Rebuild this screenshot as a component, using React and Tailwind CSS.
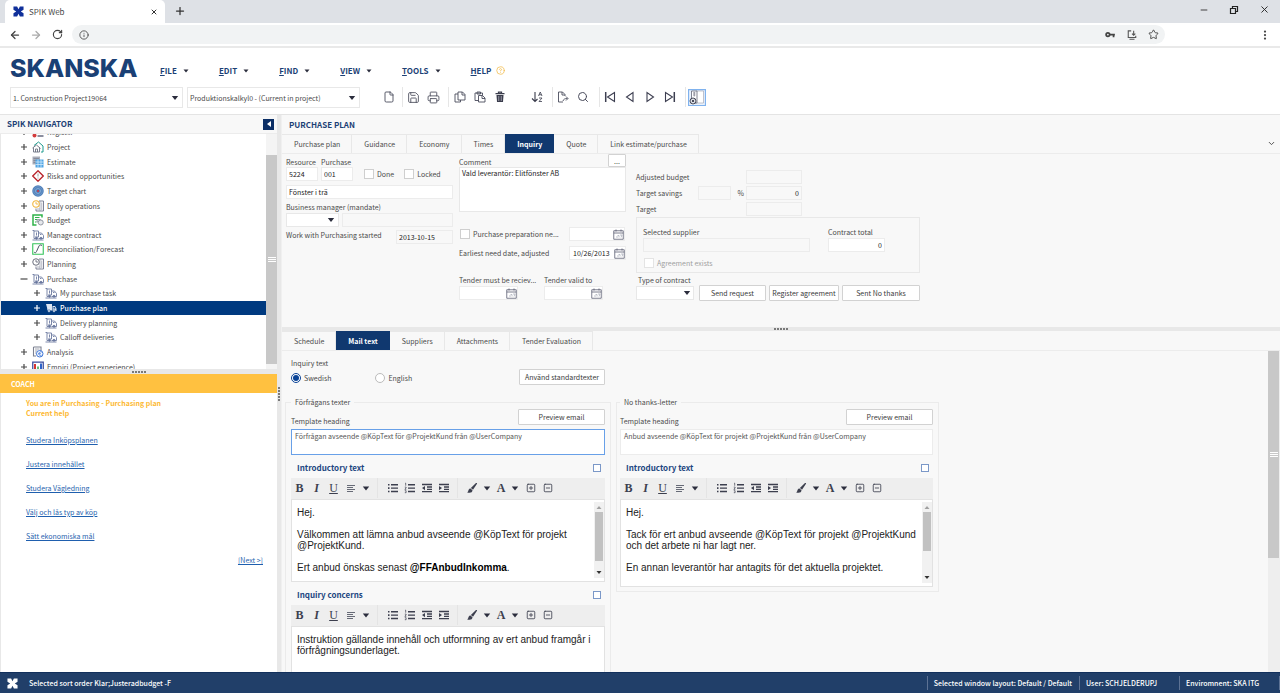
import React from "react";
import {
  File, Save, Printer, Search, Plus, X, Minus,
  ArrowLeft, ArrowRight, RotateCw, Info, Star, MoreVertical, ChevronDown, CircleHelp,
  SquarePlus, SquareMinus,
} from "lucide-react";

function Caret({ className = "" }) {
  return (
    <svg viewBox="0 0 8 5" className={"h-[5px] w-[8px] shrink-0 " + className} aria-hidden="true">
      <path d="M0.8 0.5h6.400L4 4.500z" fill="#2b2d3d" />
    </svg>
  );
}

function SpikMark({ color = "#10309a", className = "h-3 w-3" }) {
  return (
    <svg viewBox="0 0 24 24" className={className} aria-hidden="true">
      <path d="M1 1h8l3 6 3-6h8v7l-6 4 6 4v7h-8l-3-6-3 6H1v-7l6-4-6-4z" fill={color} />
    </svg>
  );
}

/* ---------- navigator icons ---------- */
const sv = "h-[12px] w-[12px] shrink-0";
const icons = {
  register: (
    <svg viewBox="0 0 24 24" className={sv}><circle cx="5" cy="19" r="4" fill="#d33c3c" /><path d="M11 20h12M11 12h12" stroke="#666a80" strokeWidth="3" /></svg>
  ),
  project: (
    <svg viewBox="0 0 24 24" className={sv} fill="none"><path d="M4 9l9-7 9 8v12h-4" stroke="#1d9a8c" strokeWidth="2" /><path d="M1 14l8-6 8 7M3 13v9h12v-9M7 22v-6h4v6" stroke="#6a6f80" strokeWidth="1.800" /></svg>
  ),
  estimate: (
    <svg viewBox="0 0 24 24" className={sv}><path d="M1 1h15v16H1z" fill="#a9adb8" /><path d="M3 5h11M3 9h11M3 13h11" stroke="#7c8090" strokeWidth="1.500" /><path d="M7 7h16v16H7z" fill="#4fa4e4" /><path d="M7 12h16M7 17h16M12 7v16M18 7v16" stroke="#d8edfc" strokeWidth="1.500" /></svg>
  ),
  risk: (
    <svg viewBox="0 0 24 24" className={sv} fill="none"><path d="M12 1.500L22.500 12 12 22.500 1.500 12z" stroke="#b8232b" strokeWidth="2.600" /><path d="M12 7v6M12 15v2" stroke="#999" strokeWidth="2" /></svg>
  ),
  target: (
    <svg viewBox="0 0 24 24" className={sv}><circle cx="12" cy="12" r="11.500" fill="#4e7fba" /><circle cx="12" cy="12" r="8.500" fill="none" stroke="#7ea6d2" strokeWidth="1.200" /><circle cx="12" cy="12" r="5" fill="none" stroke="#a4c1e2" strokeWidth="1.300" /><circle cx="12" cy="12" r="2" fill="#d3303a" /></svg>
  ),
  daily: (
    <svg viewBox="0 0 24 24" className={sv} fill="none"><path d="M14 2h9v20H8v-5" stroke="#70758a" strokeWidth="1.800" /><path d="M16 2v20M19.500 5v15M10 18h6" stroke="#9a9eae" strokeWidth="1.500" /><circle cx="8" cy="8" r="6.500" fill="#fff" stroke="#f0b53a" strokeWidth="2.200" /><path d="M8 4v4h4" stroke="#f0b53a" strokeWidth="1.800" /></svg>
  ),
  budget: (
    <svg viewBox="0 0 24 24" className={sv} fill="none"><path d="M20 7V2H2v20h7" stroke="#2fb34a" strokeWidth="3" /><path d="M6 7h9M6 11h4M6 16h3" stroke="#2fb34a" strokeWidth="2.200" /><path d="M10 11h7v5h-7z" fill="#d5d9de" stroke="#8a8f9c" strokeWidth="1.500" /><circle cx="17.500" cy="17" r="5" fill="#e6e8ec" stroke="#8a8f9c" strokeWidth="1.800" /></svg>
  ),
  truck: (
    <svg viewBox="0 0 24 24" className={sv} fill="none" stroke="#66749c" strokeWidth="1.700"><path d="M1 3h3v16h3M4 4h9v12H6M9 7v6M13 8h6l4 5v6h-3M13 19h3M16 11h3M1 22h22" /><circle cx="9" cy="18.500" r="2" fill="#66749c" /><circle cx="18" cy="18.500" r="2" fill="#66749c" /></svg>
  ),
  truckWhite: (
    <svg viewBox="0 0 24 24" className={sv} fill="none"><path d="M2 4h12v13H5l-1-6zM15 8h5l3 5v5h-8z" fill="#dfe6f2" /><path d="M17 10h2l2 3h-4z" fill="#003a80" /><circle cx="8" cy="18" r="2.500" fill="#fff" stroke="#003a80" /><circle cx="18" cy="18" r="2.500" fill="#fff" stroke="#003a80" /></svg>
  ),
  forecast: (
    <svg viewBox="0 0 24 24" className={sv} fill="none"><path d="M1.500 1.500h21v21h-21z" stroke="#34c45a" strokeWidth="2.200" /><path d="M4 18c2 2 4 2 5-1l5-11c1-2 3-3 6-1" stroke="#4c5566" strokeWidth="2" /></svg>
  ),
  planning: (
    <svg viewBox="0 0 24 24" className={sv} fill="none"><path d="M14 2h9v20H8v-5" stroke="#70758a" strokeWidth="1.800" /><path d="M16 2v20M19.500 5v15M10 18h6" stroke="#9a9eae" strokeWidth="1.500" /><circle cx="8" cy="8" r="6.500" fill="#fff" stroke="#5a5e6e" strokeWidth="1.800" /><path d="M8 4v4h4" stroke="#5a5e6e" strokeWidth="1.600" /></svg>
  ),
  analysis: (
    <svg viewBox="0 0 24 24" className={sv} fill="none"><path d="M3 2h15v8M3 2v18h5" stroke="#7b8090" strokeWidth="2.200" /><path d="M6 6h9M6 10h5M6 14h3" stroke="#a2a6b2" strokeWidth="2" /><circle cx="15.500" cy="15.500" r="6.500" fill="#fff" stroke="#3b74d8" strokeWidth="2" /><path d="M12 15.500h6M19 12.500c-3-2-5 0-5 3s2 5 5 3" stroke="#3b74d8" strokeWidth="1.600" /></svg>
  ),
  empiri: (
    <svg viewBox="0 0 24 24" className={sv} fill="none"><path d="M1.500 2h21v20h-21z" stroke="#3c4c9c" strokeWidth="2.500" /><path d="M6 6v15" stroke="#d8362f" strokeWidth="4" /><path d="M12 11v10" stroke="#2fa84a" strokeWidth="3" /><path d="M18 5v16" stroke="#2f62c8" strokeWidth="4" /></svg>
  ),
};

const tree = [
  ["Register", "register"],
  ["Project", "project"],
  ["Estimate", "estimate"],
  ["Risks and opportunities", "risk"],
  ["Target chart", "target"],
  ["Daily operations", "daily"],
  ["Budget", "budget"],
  ["Manage contract", "truck"],
  ["Reconciliation/Forecast", "forecast"],
  ["Planning", "planning"],
  ["Purchase", "truck", "open"],
  ["My purchase task", "truck", "child"],
  ["Purchase plan", "truckWhite", "active"],
  ["Delivery planning", "truck", "child"],
  ["Calloff deliveries", "truck", "child"],
  ["Analysis", "analysis"],
  ["Empiri (Project experience)", "empiri"],
];

function TreeRow({ label, icon, kind }) {
  const nested = kind === "child" || kind === "active";
  return (
    <li
      className={
        "flex min-h-0 flex-1 items-center " +
        (nested ? "pl-[32px] " : "pl-[19px] ") +
        (kind === "active" ? "bg-[#003a80] font-medium text-white" : "text-[#4a4a4a]")
      }
    >
      <button type="button" aria-label={(kind === "open" ? "Collapse " : "Expand ") + label} className="flex h-2 w-2 items-center">
        <svg viewBox="0 0 8 8" className="h-2 w-2">
          <path d={kind === "open" ? "M0.500 4h7" : "M1 4h6M4 1v6"} stroke="currentColor" strokeWidth="1.200" />
        </svg>
      </button>
      <span className="ml-1 mr-[3px]">{icons[icon]}</span>
      <a href="#" className="whitespace-nowrap">{label}</a>
    </li>
  );
}

function ScrollGrip() {
  return (
    <div className="flex flex-col gap-px">
      <span className="h-px w-2 bg-white" />
      <span className="h-px w-2 bg-white" />
      <span className="h-px w-2 bg-white" />
    </div>
  );
}

function Dots({ vertical }) {
  return (
    <div className={"flex gap-px " + (vertical ? "flex-col" : "")}>
      {[0, 1, 2, 3, 4].map((i) => (
        <span key={i} className="h-[2px] w-[2px] rounded-full bg-[#555]" />
      ))}
    </div>
  );
}

function ToolBtn({ label, children, className = "w-5" }) {
  return (
    <button type="button" aria-label={label} className={"flex h-5 items-center justify-center text-[#4a4c5c] " + className}>
      {children}
    </button>
  );
}

function Sep({ className = "" }) {
  return <span className={"h-5 w-px bg-[#e6e6e6] " + className} />;
}

function NavTri({ flip, bar }) {
  return (
    <svg viewBox="0 0 12 12" className={"h-3 w-3 " + (flip ? "-scale-x-100" : "")} fill="none" stroke="#3c3e50" strokeWidth="1.100">
      <path d={bar ? "M1.500 1.500v9L8.500 6z" : "M3 1.500v9L9.500 6z"} />
      {bar && <path d="M10.300 1v10" strokeWidth="1.500" />}
    </svg>
  );
}

function Tabs({ items, active }) {
  return (
    <div role="tablist" className="flex h-[19px]">
      {items.map((t) => (
        <button
          key={t}
          role="tab"
          type="button"
          aria-selected={t === active}
          className={
            "border-r px-[11px] " +
            (t === active ? "border-[#10386f] bg-[#10386f] pl-3 font-bold text-white" : "border-[#e8e8e8] border-t pl-3 text-[#4a4a4a]")
          }
        >
          {t}
        </button>
      ))}
    </div>
  );
}

const inputBase = "h-[14px] min-w-0 border border-[#ececec] px-[2px] text-[#222] outline-none ";

function Check({ id, label, disabled }) {
  return (
    <div className="flex items-center gap-[3px]">
      <input id={id} type="checkbox" disabled={disabled} className="h-[10px] w-[10px] appearance-none border border-[#cfcfcf] bg-white disabled:border-[#e4e4e4]" />
      <label htmlFor={id} className={"whitespace-nowrap " + (disabled ? "text-[#a0a0a0]" : "")}>{label}</label>
    </div>
  );
}

function Select({ label, value, className, caret = "right-1" }) {
  return (
    <div className={"relative " + className}>
      <select aria-label={label} className="h-full w-full appearance-none border border-[#e8e8e8] bg-white px-[2px] text-[#4a4a4a] outline-none">
        <option>{value}</option>
      </select>
      <Caret className={"pointer-events-none absolute top-1/2 -translate-y-1/2 " + caret} />
    </div>
  );
}

function DateField({ id, value = "", label, className }) {
  return (
    <div className={"flex h-[14px] items-center border border-[#ececec] bg-white " + className}>
      <input id={id} aria-label={label} defaultValue={value} className="min-w-0 flex-1 bg-transparent pl-[3px] text-[#222] outline-none" />
      <button type="button" aria-label={"Pick date: " + label} className="shrink-0">
        <svg viewBox="0 0 22 22" className="h-[11px] w-[11px]" fill="none" stroke="#50546a" strokeWidth="1.500">
          <path d="M1.500 3.500h19v17h-19zM1.500 8h19M6 1v4M16 1v4" />
          <path d="M6 16h4M9 13h3v4M14 12h4l-2 5" stroke="#a8acb8" />
        </svg>
      </button>
    </div>
  );
}

function Btn({ children, className = "" }) {
  return (
    <button type="button" className={"whitespace-nowrap rounded-[1px] border border-[#d2d2d2] bg-white text-[#3a3a3a] " + className}>
      {children}
    </button>
  );
}

const ink = "#3c3f4e";

function Indent({ out }) {
  return (
    <svg viewBox="0 0 12 12" className="h-3 w-3" stroke={ink} strokeWidth="1.300" fill="none">
      <path d="M1 2.500h10M6 5h5M6 7.300h5M1 9.700h10" />
      <path d={out ? "M4 4v4.200L1 6.100z" : "M1 4v4.200L4 6.100z"} fill={ink} stroke="none" />
    </svg>
  );
}

function ListIcon({ ordered }) {
  return (
    <svg viewBox="0 0 12 12" className="h-3 w-3" stroke={ink} strokeWidth="1.400" fill="none">
      <path d="M4 2.700h7M4 6.100h7M4 9.500h7" />
      {ordered ? (
        <path d="M1 1.200h0.700v2.500M0.800 5.100h1.300v1L0.800 7.300h1.500M0.800 8.700h1.300v2H0.800" strokeWidth="0.700" />
      ) : (
        <path d="M1 2.700h1.500M1 6.100h1.500M1 9.500h1.500" strokeWidth="1.600" />
      )}
    </svg>
  );
}

function EditorToolbar() {
  const c = "flex h-[21px] w-[17px] items-center justify-center text-[#3c3f4e] ";
  const t = "flex h-[21px] w-[14px] items-center justify-center text-[#3c3f4e] ";
  const serif = "font-['Liberation_Serif',serif] text-[12px] leading-none ";
  return (
    <div role="toolbar" className="flex h-[21px] items-center bg-[#eeeeee] pb-px">
      <button type="button" aria-label="Bold" className={c + serif + "font-bold"}>B</button>
      <button type="button" aria-label="Italic" className={c + serif + "font-bold italic"}>I</button>
      <button type="button" aria-label="Underline" className={c + serif + "underline"}>U</button>
      <button type="button" aria-label="Align" className={c}>
        <svg viewBox="0 0 10 10" className="h-[10px] w-[10px]" stroke="#666a76" strokeWidth="1"><path d="M1 2.500h8M1 4.500h6M1 6.500h8M1 8.500h6" /></svg>
      </button>
      <button type="button" aria-label="Alignment options" className={t}><Caret /></button>
      <span className="ml-1 h-5 w-px bg-[#e4e4e4]" />
      <button type="button" aria-label="Bulleted list" className={c + "ml-[6px]"}><ListIcon /></button>
      <button type="button" aria-label="Numbered list" className={c}><ListIcon ordered /></button>
      <button type="button" aria-label="Outdent" className={c}><Indent out /></button>
      <button type="button" aria-label="Indent" className={c}><Indent /></button>
      <span className="mx-[5px] h-5 w-px bg-[#e4e4e4]" />
      <button type="button" aria-label="Highlight" className={c}>
        <svg viewBox="0 0 12 12" className="h-3 w-3"><path d="M11 1.800L7 7.800 4.900 6.100 9.700 1.200c.8-.5 1.700 0 1.300.6z M4.500 6.500l2 1.700c0 2.300-2.300 3-5.300 2.200 1.200-.6 1-1.400 1.300-2.300.4-1 1-1.600 2-1.600z" fill={ink} /></svg>
      </button>
      <button type="button" aria-label="Highlight colours" className={t}><Caret /></button>
      <button type="button" aria-label="Text colour" className={t + serif + "font-bold"}>A</button>
      <button type="button" aria-label="Text colours" className={t}><Caret /></button>
      <button type="button" aria-label="Expand" className={c}><SquarePlus size={10} strokeWidth={2} /></button>
      <button type="button" aria-label="Shrink" className={c}><SquareMinus size={10} strokeWidth={2} /></button>
    </div>
  );
}

function Editor({ title, height, thumb, children }) {
  return (
    <section>
      <div className="flex h-[23px] items-center justify-between pl-[6px] pr-[4px] pt-[3px]">
        <h3 className="text-[8px] font-bold text-[#1c4680]">{title}</h3>
        <input type="checkbox" aria-label={"Maximise " + title} className="h-2 w-2 appearance-none border border-[#7b98c8] bg-white" />
      </div>
      <EditorToolbar />
      <div className={"flex border border-[#e2e2e2] bg-white " + height}>
        <div className="flex-1 pl-[5px] pt-[7px] font-['Liberation_Sans',sans-serif] text-[10px] leading-[11px] text-[#222]">{children}</div>
        {thumb && (
          <div className="mb-[3px] mt-[2px] flex w-[10px] flex-col items-center bg-[#f1f1f1] py-[3px]">
            <svg viewBox="0 0 6 4" className="h-[4px] w-[6px]"><path d="M0.500 4h5L3 1z" fill="#a0a0a0" /></svg>
            <div className={"mt-[3px] w-2 bg-[#c1c1c1] " + thumb} />
            <svg viewBox="0 0 6 4" className="mt-auto h-[4px] w-[6px]"><path d="M0.500 0h5L3 3z" fill="#333" /></svg>
          </div>
        )}
      </div>
    </section>
  );
}

function MailBlock({ legend, id, value, focused, className, children }) {
  return (
    <fieldset className={"min-w-0 border border-[#ebebeb] " + className}>
      <legend className="px-[4px] leading-[10px]">{legend}</legend>
      <div className="mt-[2px] flex h-[17px] items-start justify-between">
        <label htmlFor={id} className="pt-[7px] leading-[10px]">Template heading</label>
        <Btn className="h-4 w-[87px]">Preview email</Btn>
      </div>
      <textarea
        id={id}
        defaultValue={value}
        className={
          "mt-[3px] block h-[26px] w-full resize-none overflow-hidden border bg-white px-[3px] pt-px text-[#555] outline-none " +
          (focused ? "border-[#68a0e8]" : "border-[#ececec]")
        }
      />
      {children}
    </fieldset>
  );
}

export default function App() {
  return (
    <div className="flex h-screen flex-col overflow-hidden bg-white font-['Noto_Sans_CJK_SC',sans-serif] text-[7px] leading-[10px] text-[#4a4a4a]">
      {/* browser chrome */}
      <div className="flex h-[23px] shrink-0 items-end bg-[#dee1e6] pl-[5px]">
        <div className="flex h-[23px] w-[160px] items-center rounded-t-[5px] bg-white pl-2 pr-[7px]">
          <SpikMark className="h-[11px] w-[11px]" />
          <span className="ml-[5px] flex-1 text-[8px]">SPIK Web</span>
          <button type="button" aria-label="Close tab"><X size={8} strokeWidth={3} color="#333" /></button>
        </div>
        <button type="button" aria-label="New tab" className="mb-[6px] ml-[9px]"><Plus size={12} strokeWidth={2.500} color="#333" /></button>
        <div className="mb-2 ml-auto mr-[10px] flex items-center gap-[20px] text-[#222]">
          <button type="button" aria-label="Minimise"><Minus size={10} /></button>
          <button type="button" aria-label="Restore">
            <svg viewBox="0 0 10 10" className="h-[10px] w-[10px]" fill="none" stroke="#222" strokeWidth="1.200"><path d="M1.500 3.500h5v5h-5zM3.500 3.500v-2h5v5h-2" /></svg>
          </button>
          <button type="button" aria-label="Close"><X size={11} strokeWidth={2} /></button>
        </div>
      </div>
      <div className="flex h-[25px] shrink-0 items-center border-b-2 border-[#e9e9e9] px-[9px] text-[#444]">
        <button type="button" aria-label="Back"><ArrowLeft size={12} strokeWidth={2.500} /></button>
        <button type="button" aria-label="Forward" className="ml-[9px] text-[#aaa]"><ArrowRight size={12} strokeWidth={2.500} /></button>
        <button type="button" aria-label="Reload" className="ml-[10px]"><RotateCw size={11} strokeWidth={2.500} /></button>
        <div className="ml-[9px] flex h-[19px] flex-1 items-center rounded-full bg-[#f1f3f4] pl-[7px] pr-[6px]">
          <Info size={10} />
          <input aria-label="Address" className="min-w-0 flex-1 bg-transparent outline-none" />
          <div className="flex items-center gap-[11px]">
            <svg viewBox="0 0 12 8" className="h-[7px] w-[11px]" fill="none" stroke="#444" strokeWidth="2"><circle cx="3" cy="4" r="2" /><path d="M5 4h6M9.500 4v3" /></svg>
            <svg viewBox="0 0 12 12" className="h-[10px] w-[10px]" fill="none" stroke="#555" strokeWidth="1.300"><path d="M5 1H1.500v8h9V7M3 11h6M8 1v5M6 4.300L8 6.300l2-2" /></svg>
            <Star size={11} strokeWidth={2} />
          </div>
        </div>
        <button type="button" aria-label="Browser menu" className="ml-[94px]"><MoreVertical size={12} strokeWidth={2.500} /></button>
      </div>

      {/* application header */}
      <header className="shrink-0 border-b border-[#e4e4e4]">
        <div className="flex h-[39px] items-center pl-[10px]">
          <div className="w-[150px] font-['Inter',sans-serif] text-[25px] font-extrabold leading-[26px] text-[#1a4075]">SKANSKA</div>
          <nav className="mt-[6px] flex gap-[30px] text-[8px] font-bold text-[#1c3f75]">
            {["FILE", "EDIT", "FIND", "VIEW", "TOOLS"].map((m) => (
              <button key={m} type="button" className="flex items-center gap-[6px]">
                <span><span className="underline">{m[0]}</span>{m.slice(1)}</span>
                <svg viewBox="0 0 6 4" className="h-[4px] w-[6px]"><path d="M0.500 0.500h5L3 3.500z" fill="#2b2d3d" /></svg>
              </button>
            ))}
            <button type="button" className="flex items-center gap-[5px]">
              <span><span className="underline">H</span>ELP</span>
              <CircleHelp size={9} color="#f2bb4a" strokeWidth={2} />
            </button>
          </nav>
        </div>
        <div className="flex h-[27px] items-start pl-[10px]">
          <Select label="Project" value="1. Construction Project19064" className="h-[21px] w-[173px]" />
          <Select label="Calculation" value="Produktionskalkyl0 - (Current in project)" className="ml-1 h-[21px] w-[173px]" />
          <div className="ml-[19px] flex items-center">
            <ToolBtn label="New"><File size={12} strokeWidth={1.800} /></ToolBtn>
            <Sep className="ml-[3px]" />
            <ToolBtn label="Save"><Save size={13} strokeWidth={1.600} /></ToolBtn>
            <ToolBtn label="Print"><Printer size={13} strokeWidth={1.600} /></ToolBtn>
            <Sep className="ml-[5px]" />
            <ToolBtn label="Copy" className="ml-px w-5">
              <svg viewBox="0 0 24 24" className="h-3 w-3" fill="none" stroke="#4a4c5c" strokeWidth="1.800"><path d="M8 6H2v16h11v-4M8 2h9l5 5v11H8zM16 2v6h6" /></svg>
            </ToolBtn>
            <ToolBtn label="Paste">
              <svg viewBox="0 0 24 24" className="h-3 w-3" fill="none" stroke="#4a4c5c" strokeWidth="1.800"><path d="M9 19H2V4h15v5M6 2h7v4H6zM9 9h8l5 5v8H9zM16 9v6h6" /></svg>
            </ToolBtn>
            <ToolBtn label="Delete">
              <svg viewBox="0 0 24 24" className="h-3 w-3"><path d="M3 5h18M9 4V2h6v2" stroke="#3a3c4c" strokeWidth="2.500" fill="none" /><path d="M5 8h14l-1 14H6z" fill="#3a3c4c" /><path d="M9.500 10v10M14.500 10v10" stroke="#b8bac4" strokeWidth="1.500" /></svg>
            </ToolBtn>
            <ToolBtn label="Sort" className="ml-[17px] w-5">
              <svg viewBox="0 0 24 24" className="h-3 w-3" fill="none" stroke="#3a3c4c" strokeWidth="2"><path d="M8 2v19M2 15l6 6 5-5" strokeWidth="2.200" /><path d="M15 10l3.500-8L22 10M16 7.500h5M16 14h6l-6 7h6" strokeWidth="1.600" /></svg>
            </ToolBtn>
            <Sep className="ml-[5px]" />
            <ToolBtn label="Export">
              <svg viewBox="0 0 24 24" className="h-3 w-3" fill="none" stroke="#4a4c5c" strokeWidth="1.800"><path d="M12 22H3V2h8l5 5v3M10 2v6h6M18 11l4 4-4 4M12 20c1-4 4-5 9-5" /></svg>
            </ToolBtn>
            <ToolBtn label="Search"><Search size={12} strokeWidth={2} /></ToolBtn>
            <Sep className="ml-[6px]" />
            <ToolBtn label="First"><NavTri flip bar /></ToolBtn>
            <ToolBtn label="Previous"><NavTri flip /></ToolBtn>
            <ToolBtn label="Next"><NavTri /></ToolBtn>
            <ToolBtn label="Last"><NavTri bar /></ToolBtn>
            <Sep className="ml-[5px] mr-[2px]" />
            <ToolBtn label="Layout" className="w-[18px]">
              <svg viewBox="0 0 36 34" className="h-[17px] w-[18px]" fill="none"><path d="M1 1h34v32H1z" fill="#eaf2fc" stroke="#7fb2ee" strokeWidth="2.500" /><path d="M17 4h14v24H17z" fill="#fff" stroke="#9a9dac" strokeWidth="1.200" /><path d="M7 4h11v24H7z" fill="#fff" stroke="#5a5c6c" strokeWidth="1.500" /><path d="M10 8h5M10 12h5M12.500 6v9" stroke="#6a6c7c" strokeWidth="1.300" /><circle cx="10" cy="24" r="6" fill="#dfe2e8" stroke="#3a3c4c" strokeWidth="1.800" /><path d="M7.500 21.500l5 5M12.500 21.500l-5 5" stroke="#3a3c4c" strokeWidth="1.800" /></svg>
            </ToolBtn>
          </div>
        </div>
      </header>

      <div className="flex min-h-0 flex-1">
        {/* left panel */}
        <aside className="flex w-[277px] shrink-0 flex-col">
          <div className="flex h-[19px] shrink-0 items-center justify-between border-b border-[#ececec] bg-[#f8f8f8] pl-[7px] pr-[3px]">
            <h2 className="text-[8px] font-bold text-[#1c3f75]">SPIK NAVIGATOR</h2>
            <button type="button" aria-label="Collapse navigator" className="flex h-[11px] w-[11px] items-center justify-center bg-[#0c2f66]">
              <svg viewBox="0 0 6 6" className="h-[6px] w-[6px]"><path d="M5 0v6L1 3z" fill="#fff" /></svg>
            </button>
          </div>
          <div className="flex h-[235px] shrink-0 overflow-hidden border-l border-[#e8e8e8]">
            <ul className="-mt-[9px] flex h-[249px] flex-1 flex-col">
              {tree.map(([label, icon, kind]) => (
                <TreeRow key={label} label={label} icon={icon} kind={kind} />
              ))}
            </ul>
            <div className="flex w-[11px] flex-col bg-[#f4f4f4] pt-[21px]">
              <div className="flex h-[209px] items-center justify-center bg-[#c8c8c8]"><ScrollGrip /></div>
            </div>
          </div>
          <div className="flex h-[5px] shrink-0 items-center justify-center bg-[#e8e8e8]"><Dots /></div>
          <div className="flex h-[19px] shrink-0 items-center bg-[#ffc140] pl-[11px] font-bold text-white">COACH</div>
          <div className="flex-1 border-l border-[#e8e8e8] pl-[25px] pr-[14px] pt-[5px]">
            <p className="font-bold text-[#fdb933]">You are in Purchasing - Purchasing plan<br />Current help</p>
            <ul className="mt-[17px] flex flex-col gap-[14px] text-[#1f5fae] underline">
              {["Studera Inköpsplanen", "Justera innehållet", "Studera Vägledning", "Välj och lås typ av köp", "Sätt ekonomiska mål"].map((l) => (
                <li key={l}><a href="#">{l}</a></li>
              ))}
            </ul>
            <div className="mt-[14px] text-right text-[#1f5fae] underline"><a href="#">[Next &gt;]</a></div>
          </div>
        </aside>
        <div className="flex w-[5px] shrink-0 items-center justify-center border-r border-[#f0f0f0] bg-[#e8e8e8]"><Dots vertical /></div>

        {/* main panel */}
        <main className="flex min-w-0 flex-1 flex-col bg-[#f8f8f8]">
          <h2 className="flex h-[19px] shrink-0 items-center pl-[7px] text-[8px] font-bold text-[#1c3f75]">PURCHASE PLAN</h2>
          <div className="flex shrink-0 items-center justify-between border-b border-[#ececec] pr-1">
            <Tabs active="Inquiry" items={["Purchase plan", "Guidance", "Economy", "Times", "Inquiry", "Quote", "Link estimate/purchase"]} />
            <button type="button" aria-label="More tabs"><ChevronDown size={9} strokeWidth={2.500} /></button>
          </div>

          <div className="flex h-[173px] shrink-0 items-start pl-1">
            {/* identification */}
            <div className="mt-[3px] w-[167px]">
              <div className="flex items-end">
                <div className="w-[32px]">
                  <label htmlFor="res" className="block whitespace-nowrap">Resource</label>
                  <input id="res" defaultValue="5224" className={inputBase + "block w-full bg-white"} />
                </div>
                <div className="ml-[3px] w-[32px]">
                  <label htmlFor="pur" className="block whitespace-nowrap">Purchase</label>
                  <input id="pur" defaultValue="001" className={inputBase + "block w-full bg-white"} />
                </div>
                <div className="ml-[11px] flex gap-[10px] pb-[2px]">
                  <Check id="done" label="Done" />
                  <Check id="locked" label="Locked" />
                </div>
              </div>
              <input aria-label="Description" defaultValue="Fönster i trä" className={inputBase + "mt-1 block w-full bg-white"} />
              <label htmlFor="bm" className="mt-[3px] block">Business manager (mandate)</label>
              <div className="mt-px flex gap-[3px]">
                <Select label="Business manager" value="" className="h-[14px] w-[53px]" />
                <input id="bm" readOnly className={inputBase + "flex-1 bg-transparent"} />
              </div>
              <div className="mt-[3px] flex items-start justify-between">
                <label htmlFor="ws">Work with Purchasing started</label>
                <input id="ws" readOnly defaultValue="2013-10-15" className={inputBase + "w-[57px] bg-transparent"} />
              </div>
            </div>

            {/* comment and dates */}
            <div className="ml-[6px] w-[167px]">
              <div className="flex h-[13px] items-end justify-between">
                <label htmlFor="comment">Comment</label>
                <Btn className="h-[13px] w-[18px] leading-[8px]">...</Btn>
              </div>
              <textarea id="comment" defaultValue="Vald leverantör: Elitfönster AB" className="block h-[45px] w-full resize-none border border-[#e8e8e8] bg-white px-[2px] text-[#222] outline-none" />
              <div className="mt-[15px] flex items-center justify-between pl-px">
                <Check id="prep" label="Purchase preparation ne..." />
                <DateField label="Purchase preparation" className="mr-[1px] w-[56px]" />
              </div>
              <div className="mt-[5px] flex items-center justify-between">
                <label htmlFor="need">Earliest need date, adjusted</label>
                <DateField id="need" label="Earliest need date" value="10/26/2013" className="w-[57px]" />
              </div>
              <div className="mt-[15px] flex">
                <div className="w-[85px]">
                  <label htmlFor="tr" className="mb-px block whitespace-nowrap">Tender must be reciev...</label>
                  <DateField id="tr" label="Tender must be recieved" className="w-[59px]" />
                </div>
                <div>
                  <label htmlFor="tv" className="mb-px block whitespace-nowrap">Tender valid to</label>
                  <DateField id="tv" label="Tender valid to" className="w-[59px]" />
                </div>
              </div>
            </div>

            {/* budget and contract */}
            <div className="ml-[10px] mt-4 w-[284px]">
              <div className="grid w-[166px] grid-cols-[62px_33px_15px_56px] items-center gap-y-[2px]">
                <label htmlFor="ab" className="col-span-3 whitespace-nowrap">Adjusted budget</label>
                <input id="ab" readOnly className={inputBase + "bg-transparent"} />
                <label htmlFor="ts" className="whitespace-nowrap">Target savings</label>
                <input id="ts" readOnly className={inputBase + "bg-transparent"} />
                <span className="pr-[2px] text-right">%</span>
                <input aria-label="Target savings amount" readOnly defaultValue="0" className={inputBase + "bg-transparent text-right"} />
                <label htmlFor="tg" className="col-span-3">Target</label>
                <input id="tg" readOnly className={inputBase + "bg-transparent"} />
              </div>
              <div className="mt-px border border-[#e8e8e8] px-[6px] pb-1 pt-[9px]">
                <div className="flex gap-[18px]">
                  <div className="w-[167px]">
                    <label htmlFor="sup" className="mb-px block">Selected supplier</label>
                    <input id="sup" readOnly className={inputBase + "block w-full bg-transparent"} />
                  </div>
                  <div className="w-[57px]">
                    <label htmlFor="ct" className="mb-px block whitespace-nowrap">Contract total</label>
                    <input id="ct" defaultValue="0" className={inputBase + "block w-full bg-white text-right"} />
                  </div>
                </div>
                <div className="mt-[6px] pl-px"><Check id="ae" label="Agreement exists" disabled /></div>
              </div>
              <div className="mt-[2px] pl-[2px]">Type of contract</div>
              <div className="flex items-center">
                <Select label="Type of contract" value="" className="h-[14px] w-[58px]" caret="right-[3px]" />
                <Btn className="ml-[5px] h-4 w-[67px]">Send request</Btn>
                <Btn className="ml-[3px] h-4 w-[70px]">Register agreement</Btn>
                <Btn className="ml-[3px] h-4 w-[78px]">Sent No thanks</Btn>
              </div>
            </div>
          </div>

          <div className="flex h-[4px] shrink-0 items-center justify-center bg-[#e8e8e8]"><Dots /></div>

          <div className="shrink-0 border-b border-[#ececec]">
            <Tabs active="Mail text" items={["Schedule", "Mail text", "Suppliers", "Attachments", "Tender Evaluation"]} />
          </div>
          <div className="flex min-h-0 flex-1">
            <div className="min-w-0 flex-1 overflow-hidden pl-[3px]">
              <div className="flex w-[320px] items-start justify-between pl-[6px] pt-[7px]">
                <div>
                  <div>Inquiry text</div>
                  <div className="mt-[5px] flex gap-[44px]">
                    <label className="flex items-center gap-[3px]">
                      <input type="radio" name="lang" defaultChecked className="h-[10px] w-[10px] accent-[#0a4396]" />Swedish
                    </label>
                    <label className="flex items-center gap-[3px]">
                      <input type="radio" name="lang" className="h-[10px] w-[10px] appearance-none rounded-full border border-[#bbb] bg-white" />English
                    </label>
                  </div>
                </div>
                <Btn className="mt-[11px] h-4 w-[86px]">Använd standardtexter</Btn>
              </div>
              <div className="mt-3 flex items-start gap-[5px]">
                <MailBlock legend="Förfrågans texter" id="m1" value="Förfrågan avseende @KöpText för @ProjektKund från @UserCompany" focused className="w-[326px] px-[5px]">
                  <Editor title="Introductory text" height="h-[83px]" thumb="h-[49px]">
                    <p>Hej.</p><br />
                    <p>Välkommen att lämna anbud avseende @KöpText för projekt @ProjektKund.</p><br />
                    <p>Ert anbud önskas senast <b className="text-black">@FFAnbudInkomma</b>.</p>
                  </Editor>
                  <Editor title="Inquiry concerns" height="h-[83px]">
                    <p>Instruktion gällande innehåll och utformning av ert anbud framgår i förfrågningsunderlaget.</p>
                  </Editor>
                </MailBlock>
                <MailBlock legend="No thanks-letter" id="m2" value="Anbud avseende @KöpText för projekt @ProjektKund från @UserCompany" className="w-[323px] pb-1 pl-[3px] pr-[5px]">
                  <Editor title="Introductory text" height="h-[88px]" thumb="h-[39px]">
                    <p>Hej.</p><br />
                    <p>Tack för ert anbud avseende @KöpText för projekt @ProjektKund och det arbete ni har lagt ner.</p><br />
                    <p>En annan leverantör har antagits för det aktuella projektet.</p>
                  </Editor>
                </MailBlock>
              </div>
            </div>
            <div className="w-[12px] bg-[#eeeeee] pr-px">
              <div className="flex h-[207px] items-center justify-center bg-[#c8c8c8]"><ScrollGrip /></div>
            </div>
          </div>
        </main>
      </div>

      {/* status bar */}
      <footer className="flex h-[21px] shrink-0 items-center border-t border-[#12305c] bg-[#213f69] pl-[7px] font-medium text-white">
        <SpikMark color="#fff" className="h-[11px] w-[11px]" />
        <span className="ml-[11px] flex-1">Selected sort order Klar;Justeradbudget -F</span>
        <span className="border-l border-[#5d7294] py-[2px] pl-[6px] pr-[7px]">Selected window layout: Default / Default</span>
        <span className="w-[100px] border-l border-[#5d7294] py-[2px] pl-[6px]">User: SCHJELDERUPJ</span>
        <span className="w-[101px] border-l border-r border-[#5d7294] py-[2px] pl-[6px]">Enviromnent: SKA ITG</span>
      </footer>
    </div>
  );
}
